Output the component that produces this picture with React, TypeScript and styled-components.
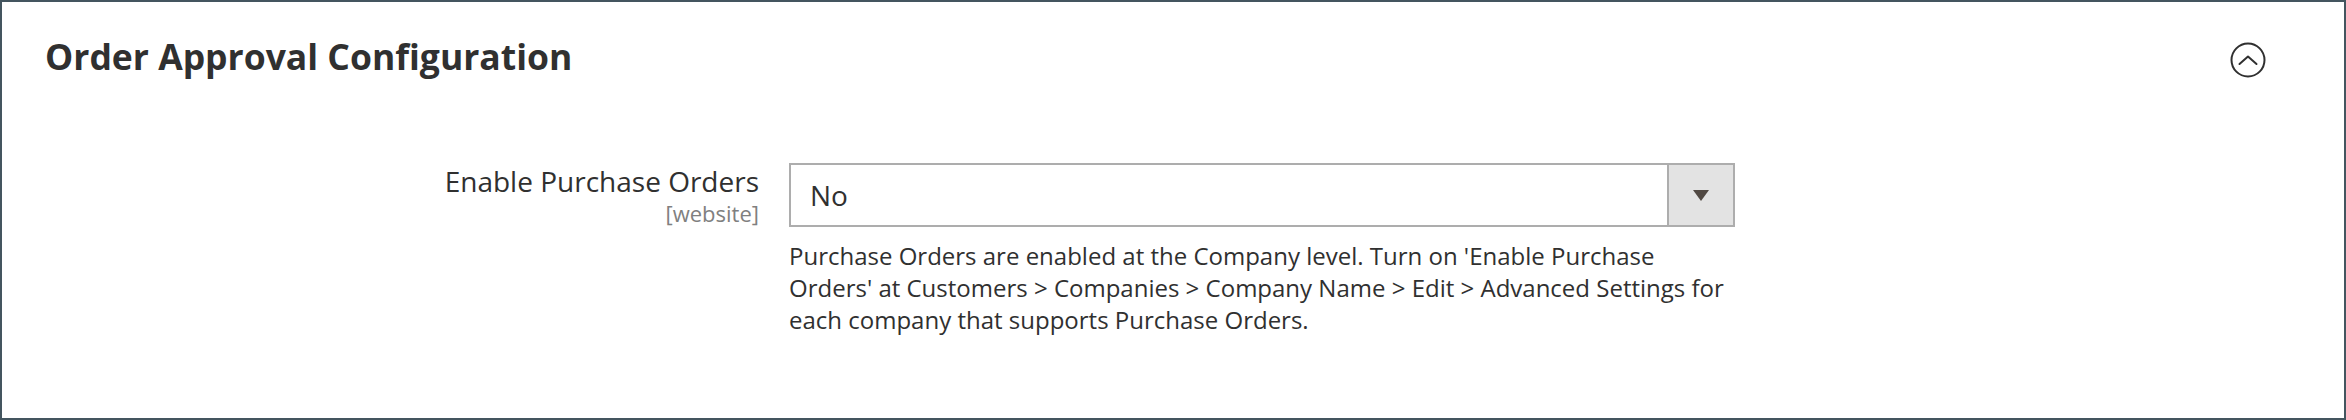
import React from 'react';
import styled, { createGlobalStyle } from 'styled-components';

const Global = createGlobalStyle`
  html, body { margin: 0; padding: 0; background: #ffffff; }
  body { font-family: "Open Sans", "Noto Sans", sans-serif; color: #303030; }
  * { box-sizing: border-box; }
`;

const Section = styled.section`
  width: 2346px;
  height: 420px;
  border: 2px solid #44555f;
  background: #ffffff;
  display: flex;
  flex-direction: column;
`;

const Header = styled.header`
  display: flex;
  align-items: flex-start;
  justify-content: space-between;
  padding: 30px 78px 0 43px;
`;

const Title = styled.h2`
  margin: 0;
  font-size: 35.5px;
  line-height: 48px;
  font-weight: 700;
  color: #303030;
`;

const Toggle = styled.button`
  width: 36px;
  height: 36px;
  margin-top: 10px;
  padding: 0;
  border: none;
  background: transparent;
  display: flex;
  align-items: center;
  justify-content: center;
  cursor: pointer;
`;

const Field = styled.div`
  display: grid;
  grid-template-columns: 757px 946px;
  column-gap: 30px;
  padding-top: 83px;
`;

const LabelBlock = styled.div`
  text-align: right;
  display: flex;
  flex-direction: column;
  align-items: flex-end;
`;

const Label = styled.label`
  font-size: 28px;
  line-height: 36px;
  color: #303030;
`;

const Scope = styled.span`
  font-size: 22px;
  line-height: 28px;
  color: #808080;
`;

const Control = styled.div`
  display: flex;
  flex-direction: column;
`;

const Select = styled.div`
  height: 64px;
  border: 2px solid #adadad;
  display: flex;
  background: #ffffff;
`;

const Value = styled.span`
  flex: 1;
  display: flex;
  align-items: center;
  padding-left: 19px;
  font-size: 28px;
  color: #303030;
`;

const Arrow = styled.span`
  width: 66px;
  border-left: 2px solid #adadad;
  background: #e3e3e3;
  display: flex;
  align-items: center;
  justify-content: center;
`;

const Note = styled.p`
  margin: 13px 0 0;
  font-size: 24px;
  line-height: 32px;
  color: #303030;
`;

export default function App() {
  return (
    <>
      <Global />
      <Section>
        <Header>
          <Title>Order Approval Configuration</Title>
          <Toggle aria-label="Collapse">
            <svg width="36" height="36" viewBox="0 0 36 36" fill="none">
              <circle cx="18" cy="18" r="16.5" stroke="#303030" strokeWidth="2" />
              <path d="M9.5 22 L18 14.5 L26.5 22" stroke="#303030" strokeWidth="2" strokeLinecap="round" strokeLinejoin="round" />
            </svg>
          </Toggle>
        </Header>
        <Field>
          <LabelBlock>
            <Label>Enable Purchase Orders</Label>
            <Scope>[website]</Scope>
          </LabelBlock>
          <Control>
            <Select>
              <Value>No</Value>
              <Arrow>
                <svg width="16" height="11" viewBox="0 0 16 11">
                  <path d="M0 0 L16 0 L8 11 Z" fill="#514943" />
                </svg>
              </Arrow>
            </Select>
            <Note>
              Purchase Orders are enabled at the Company level. Turn on 'Enable Purchase Orders' at Customers &gt; Companies &gt; Company Name &gt; Edit &gt; Advanced Settings for each company that supports Purchase Orders.
            </Note>
          </Control>
        </Field>
      </Section>
    </>
  );
}
